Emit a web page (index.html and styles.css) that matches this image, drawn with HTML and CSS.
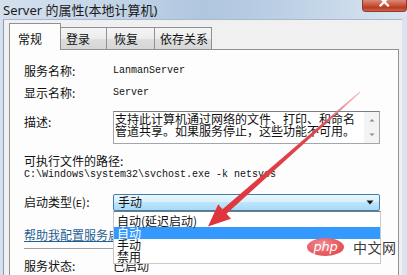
FILE: index.html
```html
<!DOCTYPE html>
<html lang="zh-CN">
<head>
<meta charset="utf-8">
<title>Server 的属性</title>
<link rel="stylesheet" href="styles.css">
</head>
<body>
<div class="window">
  <div class="titlebar">
    <span class="title">Server 的属性(本地计算机)</span>
    <div class="close">
      <svg width="45" height="12" viewBox="0 0 45 12"><path d="M18.5 -2 L26 5.5 M26 -2 L18.5 5.5" stroke="#fff" stroke-width="2.2" stroke-linecap="square"/></svg>
    </div>
  </div>
  <div class="client">
    <div class="tabs">
      <div class="tab active">常规</div>
      <div class="tab t-login">登录</div>
      <div class="tab t-recover">恢复</div>
      <div class="tab t-dep">依存关系</div>
    </div>
    <div class="panel">
      <div class="row r1"><span class="label">服务名称:</span><span class="mono">LanmanServer</span></div>
      <div class="row r2"><span class="label">显示名称:</span><span class="mono">Server</span></div>
      <div class="row r3">
        <span class="label desc-label">描述:</span>
        <div class="desc">
          <div class="desc-text">支持此计算机通过网络的文件、打印、和命名管道共享。如果服务停止，这些功能不可用。</div>
          <div class="scroll">
            <svg width="15" height="31" viewBox="0 0 15 31"><path d="M5.5 9.5 L8 7 L10.5 9.5 Z" fill="#8a8a8a"/><path d="M5.5 21.5 L8 24 L10.5 21.5 Z" fill="#8a8a8a"/></svg>
          </div>
        </div>
      </div>
      <div class="path-label">可执行文件的路径:</div>
      <div class="path mono">C:\Windows\system32\svchost.exe -k netsvcs</div>
      <div class="row r4">
        <span class="label">启动类型(<span class="mono">E</span>):</span>
        <div class="combo">
          <span class="combo-text">手动</span>
          <svg class="combo-arrow" width="8" height="5" viewBox="0 0 8 5"><path d="M0.5 0.5 L7.5 0.5 L4 4.5 Z" fill="#1a1a1a"/></svg>
          <div class="dropdown">
            <div class="item">自动(延迟启动)</div>
            <div class="item selected">自动</div>
            <div class="item">手动</div>
            <div class="item">禁用</div>
          </div>
        </div>
      </div>
      <div class="link"><span>帮助我配置服务启动依存关系</span></div>
      <div class="sep"></div>
      <div class="row r5"><span class="label">服务状态:</span><span class="status">已启动</span></div>
    </div>
  </div>
</div>
<svg class="arrow" width="407" height="275" viewBox="0 0 407 275">
  <defs>
    <linearGradient id="ag" x1="360" y1="92" x2="208" y2="226" gradientUnits="userSpaceOnUse">
      <stop offset="0" stop-color="#e9a0a6" stop-opacity="0.6"/>
      <stop offset="0.25" stop-color="#e0474e"/>
      <stop offset="1" stop-color="#e0323a"/>
    </linearGradient>
  </defs>
  <polygon points="360.4,92.5 226.5,213.8 231,218.8 208,226.5 218.2,204.3 222.5,209.2 359.6,91.5" fill="url(#ag)"/>
</svg>
<div class="watermark">
  <div class="php-logo"><span>php</span></div>
  <span class="cn">中文网</span>
</div>
</body>
</html>
```
FILE: styles.css
```css
html, body {
  margin: 0;
  padding: 0;
}
body {
  width: 407px;
  height: 275px;
  overflow: hidden;
  position: relative;
  font-family: "Noto Sans CJK SC", sans-serif;
  font-size: 12px;
  color: #111;
}
.window {
  height: 275px;
  box-sizing: border-box;
  padding: 0 5px 0 3px;
  display: flex;
  flex-direction: column;
  background: linear-gradient(90deg, #d4e0ee 0%, #c6d6e8 25%, #afc6df 50%, #bed1e6 72%, #dae5f1 100%);
}
.titlebar {
  height: 19px;
  display: flex;
  align-items: flex-start;
  flex: none;
}
.title {
  padding: 2px 0 0 0;
  font-family: "Noto Sans", "Noto Sans CJK SC", sans-serif;
  font-size: 13px;
  line-height: 16px;
  color: #1c1c1c;
}
.close {
  margin-left: auto;
  margin-right: -5px;
  width: 45px;
  height: 12px;
  box-sizing: border-box;
  border: 1px solid #8c3c2e;
  border-top: none;
  border-radius: 0 0 4px 4px;
  background: linear-gradient(180deg, #d98a78 0%, #c9553f 45%, #b93b22 70%, #d0664b 100%);
  overflow: hidden;
}
.close svg {
  display: block;
  margin: 0 -1px;
}
.client {
  flex: 1;
  background: #f0f0f0;
  border-left: 1px solid #8b9cb1;
  border-top: 1px solid #a9b8ca;
  padding: 0 3px 0 5px;
  display: flex;
  flex-direction: column;
}
.tabs {
  margin-top: 3px;
  height: 26px;
  display: flex;
  align-items: flex-end;
  flex: none;
}
.tab {
  box-sizing: border-box;
  height: 22px;
  border: 1px solid #8e9096;
  border-bottom: none;
  background: linear-gradient(180deg, #f5f5f5 0%, #ececec 50%, #dedede 51%, #d6d6d6 100%);
  font-size: 12px;
  line-height: 14px;
  padding-top: 4px;
  color: #111;
  margin-left: -1px;
}
.tab.active {
  position: relative;
  z-index: 1;
  height: 27px;
  margin-bottom: -1px;
  margin-left: 0;
  width: 52px;
  padding: 8px 0 0 8px;
  background: #fdfdfd;
}
.t-login { width: 47px; padding-left: 5px; }
.t-recover { width: 49px; padding-left: 7px; }
.t-dep { width: 58px; padding-left: 5px; }
.panel {
  flex: 1;
  border: 1px solid #8e9096;
  border-bottom: none;
  background: #fdfdfd;
  padding-left: 14px;
  display: flex;
  flex-direction: column;
}
.row {
  display: flex;
  align-items: flex-start;
  line-height: 14px;
}
.label {
  width: 89px;
  flex: none;
  font-size: 12px;
  line-height: 14px;
}
.mono {
  font-family: "Liberation Mono", monospace;
  font-size: 10px;
  line-height: 14px;
}
.r1 { margin-top: 14px; }
.r2 { margin-top: 8px; }
.r3 { margin-top: 11px; }
.desc-label { padding-top: 4px; }
.desc {
  width: 267px;
  height: 33px;
  box-sizing: border-box;
  border: 1px solid #a3a6ad;
  border-top-color: #7b7f87;
  background: #fff;
  display: flex;
}
.desc-text {
  flex: 1;
  padding: 1px 0 0 1px;
  font-size: 12px;
  line-height: 12px;
  color: #111;
}
.scroll {
  width: 15px;
  flex: none;
  background: #f3f3f3;
}
.scroll svg { display: block; }
.path-label {
  margin-top: 10px;
  line-height: 14px;
}
.path {
  white-space: pre;
}
.r4 { margin-top: 10px; align-items: center; }
.r4 .label { padding-top: 3px; }
.combo {
  position: relative;
  width: 267px;
  height: 17px;
  box-sizing: border-box;
  border: 1px solid #3c7fb1;
  border-radius: 2px;
  background: linear-gradient(180deg, #eaf6fd 0%, #d9f0fc 45%, #bee6fd 50%, #a7d9f5 100%);
  display: flex;
  align-items: center;
  padding-left: 4px;
}
.combo-text {
  font-size: 12px;
  line-height: 14px;
}
.combo-arrow {
  margin-left: auto;
  margin-right: 5px;
}
.dropdown {
  position: absolute;
  left: -1px;
  top: 16px;
  width: 268px;
  box-sizing: border-box;
  border: 1px solid #c9c9c9;
  border-top-color: #7a7a7a;
  background: #fff;
  padding-top: 3px;
  z-index: 2;
}
.item {
  height: 12px;
  line-height: 12px;
  font-size: 12px;
  padding-left: 3px;
  color: #111;
}
.item.selected {
  background: #3399ff;
  color: #fff;
}
.link {
  margin-top: 16px;
  width: 89px;
  overflow: hidden;
  line-height: 14px;
  color: #1f5f94;
  text-decoration: underline;
  white-space: nowrap;
}
.sep {
  margin-top: 6px;
  height: 1px;
  width: 356px;
  background: #a0a0a0;
  border-bottom: 1px solid #fff;
}
.r5 { margin-top: 9px; }
.status { font-size: 12px; line-height: 14px; }
.arrow {
  position: absolute;
  left: 0;
  top: 0;
  z-index: 5;
  pointer-events: none;
}
.watermark {
  position: absolute;
  left: 307px;
  top: 238px;
  z-index: 6;
  display: flex;
  align-items: center;
  gap: 9px;
}
.php-logo {
  width: 37px;
  height: 18px;
  border-radius: 50%;
  background: radial-gradient(ellipse at 40% 35%, #f28a8e 0%, #e8575d 60%, #dd474e 100%);
  display: flex;
  align-items: center;
  justify-content: center;
}
.php-logo span {
  font-family: "DejaVu Sans", sans-serif;
  font-style: italic;
  font-size: 13px;
  line-height: 13px;
  color: #fff;
  margin-top: -2px;
  letter-spacing: -0.3px;
}
.cn {
  font-size: 14px;
  line-height: 16px;
  color: #3a3a3a;
  letter-spacing: 0.5px;
}
```
